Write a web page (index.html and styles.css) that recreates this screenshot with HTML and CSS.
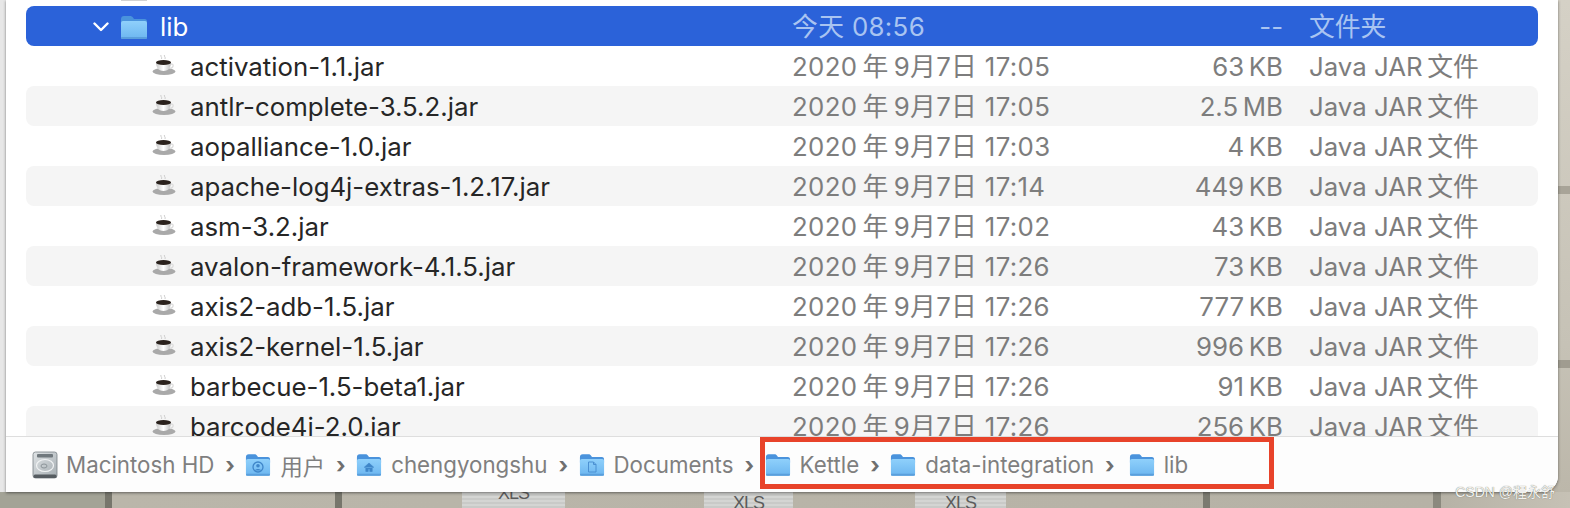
FILE: index.html
```html
<!DOCTYPE html>
<html lang="zh">
<head>
<meta charset="utf-8">
<title>lib</title>
<link rel="stylesheet" href="styles.css">
</head>
<body>
<svg class="defs" width="0" height="0" aria-hidden="true">
  <defs>
    <linearGradient id="fb" x1="0" y1="0" x2="0" y2="1"><stop offset="0" stop-color="#8fd0fb"/><stop offset="1" stop-color="#6cb6f0"/></linearGradient>
    <linearGradient id="cup" x1="0" y1="0" x2="1" y2="0"><stop offset="0" stop-color="#c9c9c9"/><stop offset=".5" stop-color="#fff"/><stop offset="1" stop-color="#bdbdbd"/></linearGradient>
    <linearGradient id="hd" x1="0" y1="0" x2="1" y2="1"><stop offset="0" stop-color="#dfe3e5"/><stop offset="1" stop-color="#a4acb1"/></linearGradient>
    <symbol id="folder" viewBox="0 0 28 26">
      <path d="M1 5.500C1 3 2 2 4 2h6c1.500 0 2 .5 3 1.500L14 5h10.500C26.500 5 27 6 27 8v3H1z" fill="#4a93dc"/>
      <rect x="1" y="7" width="26" height="18" rx="2" fill="url(#fb)"/>
      <rect x="1" y="23" width="26" height="2" rx="1" fill="#5a9fdc"/>
    </symbol>
    <symbol id="coffee" viewBox="0 0 24 22">
      <path d="M9 1c-1 1.500 1.500 2 .5 4M12.500 1c-1 1.500 1.500 2 .5 4" fill="none" stroke="#cfcfcf" stroke-width="1"/>
      <ellipse cx="12" cy="17.500" rx="11.500" ry="3.500" fill="#a9a9a9"/>
      <path d="M4 8h15c0 5-2 9-7.500 9S4 13 4 8z" fill="url(#cup)"/>
      <ellipse cx="11.500" cy="8.500" rx="7.500" ry="2.600" fill="#2a211c"/>
      <path d="M19 10c3 0 3 3.500-1 4.500" fill="none" stroke="#ddd" stroke-width="1.300"/>
    </symbol>
  </defs>
</svg>

<div class="desk">
  <div class="edge"></div>
  <main class="window">
    <div class="rows">
      <div class="sliver"></div>
      <div class="row selected">
        <div class="name folder-name">
          <svg class="chevron" viewBox="0 0 16 10"><path d="M1.500 1.500 8 8l6.500-6.500" fill="none" stroke="#fff" stroke-width="2.400" stroke-linecap="round" stroke-linejoin="round"/></svg>
          <svg class="ico-folder"><use href="#folder"/></svg>
          <span>lib</span>
        </div>
        <div class="date">今天 08:56</div>
        <div class="size">--</div>
        <div class="kind">文件夹</div>
      </div>
      <div class="row">
        <div class="name"><svg class="ico-jar"><use href="#coffee"/></svg><span>activation-1.1.jar</span></div>
        <div class="date">2020&thinsp;年&thinsp;9月7日 17:05</div><div class="size">63&thinsp;KB</div><div class="kind">Java JAR&thinsp;文件</div>
      </div>
      <div class="row alt">
        <div class="name"><svg class="ico-jar"><use href="#coffee"/></svg><span>antlr-complete-3.5.2.jar</span></div>
        <div class="date">2020&thinsp;年&thinsp;9月7日 17:05</div><div class="size">2.5&thinsp;MB</div><div class="kind">Java JAR&thinsp;文件</div>
      </div>
      <div class="row">
        <div class="name"><svg class="ico-jar"><use href="#coffee"/></svg><span>aopalliance-1.0.jar</span></div>
        <div class="date">2020&thinsp;年&thinsp;9月7日 17:03</div><div class="size">4&thinsp;KB</div><div class="kind">Java JAR&thinsp;文件</div>
      </div>
      <div class="row alt">
        <div class="name"><svg class="ico-jar"><use href="#coffee"/></svg><span>apache-log4j-extras-1.2.17.jar</span></div>
        <div class="date">2020&thinsp;年&thinsp;9月7日 17:14</div><div class="size">449&thinsp;KB</div><div class="kind">Java JAR&thinsp;文件</div>
      </div>
      <div class="row">
        <div class="name"><svg class="ico-jar"><use href="#coffee"/></svg><span>asm-3.2.jar</span></div>
        <div class="date">2020&thinsp;年&thinsp;9月7日 17:02</div><div class="size">43&thinsp;KB</div><div class="kind">Java JAR&thinsp;文件</div>
      </div>
      <div class="row alt">
        <div class="name"><svg class="ico-jar"><use href="#coffee"/></svg><span>avalon-framework-4.1.5.jar</span></div>
        <div class="date">2020&thinsp;年&thinsp;9月7日 17:26</div><div class="size">73&thinsp;KB</div><div class="kind">Java JAR&thinsp;文件</div>
      </div>
      <div class="row">
        <div class="name"><svg class="ico-jar"><use href="#coffee"/></svg><span>axis2-adb-1.5.jar</span></div>
        <div class="date">2020&thinsp;年&thinsp;9月7日 17:26</div><div class="size">777&thinsp;KB</div><div class="kind">Java JAR&thinsp;文件</div>
      </div>
      <div class="row alt">
        <div class="name"><svg class="ico-jar"><use href="#coffee"/></svg><span>axis2-kernel-1.5.jar</span></div>
        <div class="date">2020&thinsp;年&thinsp;9月7日 17:26</div><div class="size">996&thinsp;KB</div><div class="kind">Java JAR&thinsp;文件</div>
      </div>
      <div class="row">
        <div class="name"><svg class="ico-jar"><use href="#coffee"/></svg><span>barbecue-1.5-beta1.jar</span></div>
        <div class="date">2020&thinsp;年&thinsp;9月7日 17:26</div><div class="size">91&thinsp;KB</div><div class="kind">Java JAR&thinsp;文件</div>
      </div>
      <div class="row alt">
        <div class="name"><svg class="ico-jar"><use href="#coffee"/></svg><span>barcode4i-2.0.jar</span></div>
        <div class="date">2020&thinsp;年&thinsp;9月7日 17:26</div><div class="size">256&thinsp;KB</div><div class="kind">Java JAR&thinsp;文件</div>
      </div>
    </div>

    <nav class="path">
      <svg class="ico-path ico-disk" viewBox="0 0 26 28">
        <rect x="1" y="1" width="24" height="26" rx="2.500" fill="url(#hd)" stroke="#7a8287" stroke-width=".8"/>
        <rect x="5" y="3" width="16" height="3.500" rx="1" fill="#70787d"/>
        <ellipse cx="13" cy="14.500" rx="8.500" ry="6" fill="none" stroke="#f1f3f4" stroke-width="1.200"/>
        <ellipse cx="12" cy="15" rx="3" ry="2" fill="none" stroke="#8c9499"/>
        <rect x="1.500" y="23.500" width="23" height="3.500" rx="1.500" fill="#565c61"/>
      </svg>
      <span class="crumb crumb-disk">Macintosh HD</span><span class="sep">›</span>
      <span class="fold">
        <svg class="ico-path"><use href="#folder"/></svg>
        <svg class="badge" viewBox="0 0 12 12"><circle cx="6" cy="6" r="5" fill="none" stroke="#3f86c9" stroke-width="1.300"/><circle cx="6" cy="4.800" r="1.800" fill="#3f86c9"/><path d="M2.800 9.500c1-2 5.400-2 6.400 0" fill="#3f86c9"/></svg>
      </span>
      <span class="crumb">用户</span><span class="sep">›</span>
      <span class="fold">
        <svg class="ico-path"><use href="#folder"/></svg>
        <svg class="badge" viewBox="0 0 12 12"><path d="M1 6.500 6 2l5 4.500M2.800 6v4.500h2.400V8h1.600v2.500h2.400V6" fill="#3f86c9" stroke="#3f86c9" stroke-width=".6"/></svg>
      </span>
      <span class="crumb">chengyongshu</span><span class="sep">›</span>
      <span class="fold">
        <svg class="ico-path"><use href="#folder"/></svg>
        <svg class="badge" viewBox="0 0 12 12"><path d="M2.500 1h5L10 3.500V11H2.500z M7.500 1v2.500H10" fill="none" stroke="#4b90d2" stroke-width="1"/></svg>
      </span>
      <span class="crumb">Documents</span><span class="sep">›</span>
      <svg class="ico-path"><use href="#folder"/></svg>
      <span class="crumb">Kettle</span><span class="sep">›</span>
      <svg class="ico-path"><use href="#folder"/></svg>
      <span class="crumb">data-integration</span><span class="sep sep-last">›</span>
      <svg class="ico-path"><use href="#folder"/></svg>
      <span class="crumb">lib</span>
    </nav>
    <div class="highlight"></div>
  </main>
  <div class="side"></div>
</div>

<div class="wall">
  <div class="thumb t1"><span>XLS</span></div>
  <div class="thumb t2"><span>XLS</span></div>
  <div class="thumb t3"><span>XLS</span></div>
</div>
<div class="watermark">CSDN @程永舒</div>
</body>
</html>
```

FILE: styles.css
```css
* { box-sizing: border-box; }
html, body { margin: 0; padding: 0; }
body {
  width: 1570px;
  height: 508px;
  overflow: hidden;
  position: relative;
  background: #b9b5a9;
  font-family: Inter, "Noto Sans CJK SC", sans-serif;
}
.defs { position: absolute; }

.desk { display: flex; height: 492px; }
.edge { width: 6px; background: #e7e7e7; }
.side {
  flex: 1;
  background:
    linear-gradient(#a8a498, #a8a498) 0 186px / 100% 8px no-repeat,
    linear-gradient(#a09c90, #a09c90) 0 360px / 100% 8px no-repeat,
    linear-gradient(#d5d1c6, #c6c2b6 70%, #bcb7aa);
}
.window {
  width: 1552px;
  height: 492px;
  background: #fff;
  border-bottom-right-radius: 16px;
  box-shadow: 0 1px 3px rgba(40, 40, 40, .6);
  display: flex;
  flex-direction: column;
  position: relative;
  z-index: 1;
}

.rows { height: 436px; overflow: hidden; padding: 0 20px; flex: none; }
.sliver { width: 26px; height: 1px; margin: 0 0 5px 95px; background: #d2d2d2; }

.row {
  display: grid;
  grid-template-columns: 766px 491px 1fr;
  align-items: center;
  height: 40px;
  border-radius: 8px;
  font-size: 25.800px;
  line-height: 41px;
  color: #7d7d7d;
  white-space: nowrap;
}
.alt { background: #f5f5f5; }
.selected { background: #2b62d9; color: #a9c4f1; }
.selected .name { color: #fff; }

.date { grid-column: 2; grid-row: 1; letter-spacing: .35px; }
.size { grid-column: 2; grid-row: 1; text-align: right; }
.kind { padding-left: 26px; }

.name {
  display: flex;
  align-items: center;
  gap: 14px;
  padding-left: 126px;
  color: #262626;
}
.folder-name { padding-left: 66px; gap: 0; }
.chevron { width: 16px; height: 10px; margin-left: 1px; }
.ico-folder { width: 28px; height: 26px; margin: 0 12px 0 11px; }
.ico-jar { width: 24px; height: 22px; margin-bottom: 3px; }

.path {
  flex: 1;
  display: flex;
  align-items: center;
  padding-left: 26px;
  border-top: 1px solid #dedede;
  background: #fdfdfd;
  border-bottom-right-radius: 16px;
  font-size: 22.300px;
  color: #7f7f7f;
  white-space: nowrap;
}
.ico-path { width: 26px; height: 25px; flex: none; }
.ico-disk { height: 28px; }
.fold { position: relative; width: 26px; height: 25px; flex: none; display: block; }
.fold .ico-path { display: block; }
.badge { position: absolute; left: 7px; top: 9px; width: 12px; height: 12px; }
.crumb { margin-left: 9px; }
.crumb-disk { margin-left: 8px; }
.sep { margin: 0 10.500px 0 11px; font-weight: 700; color: #6f6f6f; }
.sep-last { margin-right: 14px; }

.highlight {
  position: absolute;
  left: 754px;
  top: 437px;
  width: 514px;
  height: 52px;
  border: 5px solid #e8432a;
}

.wall {
  height: 16px;
  position: relative;
  overflow: hidden;
  background:
    linear-gradient(#77766c, #77766c) 105px 0 / 7px 100% no-repeat,
    linear-gradient(#77766c, #77766c) 335px 0 / 7px 100% no-repeat,
    linear-gradient(#7b7a70, #7b7a70) 1203px 0 / 7px 100% no-repeat,
    linear-gradient(#8b897e, #8b897e) 1433px 0 / 8px 100% no-repeat,
    linear-gradient(90deg, #a3a396 0, #a3a396 105px, #bab6aa 112px, #b6b2a6 1440px, #c6c1b5);
}
.thumb {
  position: absolute;
  top: 0;
  height: 16px;
  background: repeating-linear-gradient(0deg, #c9cac8 0 2px, #d4d5d3 2px 4px);
  color: #5b5b5b;
  font-size: 18px;
  letter-spacing: -1px;
  line-height: 16px;
  text-align: center;
  font-family: "Liberation Sans", sans-serif;
  overflow: hidden;
}
.thumb span { display: block; }
.t1 { left: 462px; width: 103px; }
.t1 span { margin-top: -7px; }
.t2 { left: 704px; width: 89px; }
.t3 { left: 915px; width: 91px; }
.t2 span, .t3 span { margin-top: 3px; }

.watermark {
  position: absolute;
  right: 15px;
  top: 483px;
  z-index: 2;
  font-size: 14px;
  line-height: 18px;
  color: #f2f2ee;
  font-family: "Liberation Sans", "Noto Sans CJK SC", sans-serif;
  text-shadow: 0 0 1px #5d5d55;
}
```
